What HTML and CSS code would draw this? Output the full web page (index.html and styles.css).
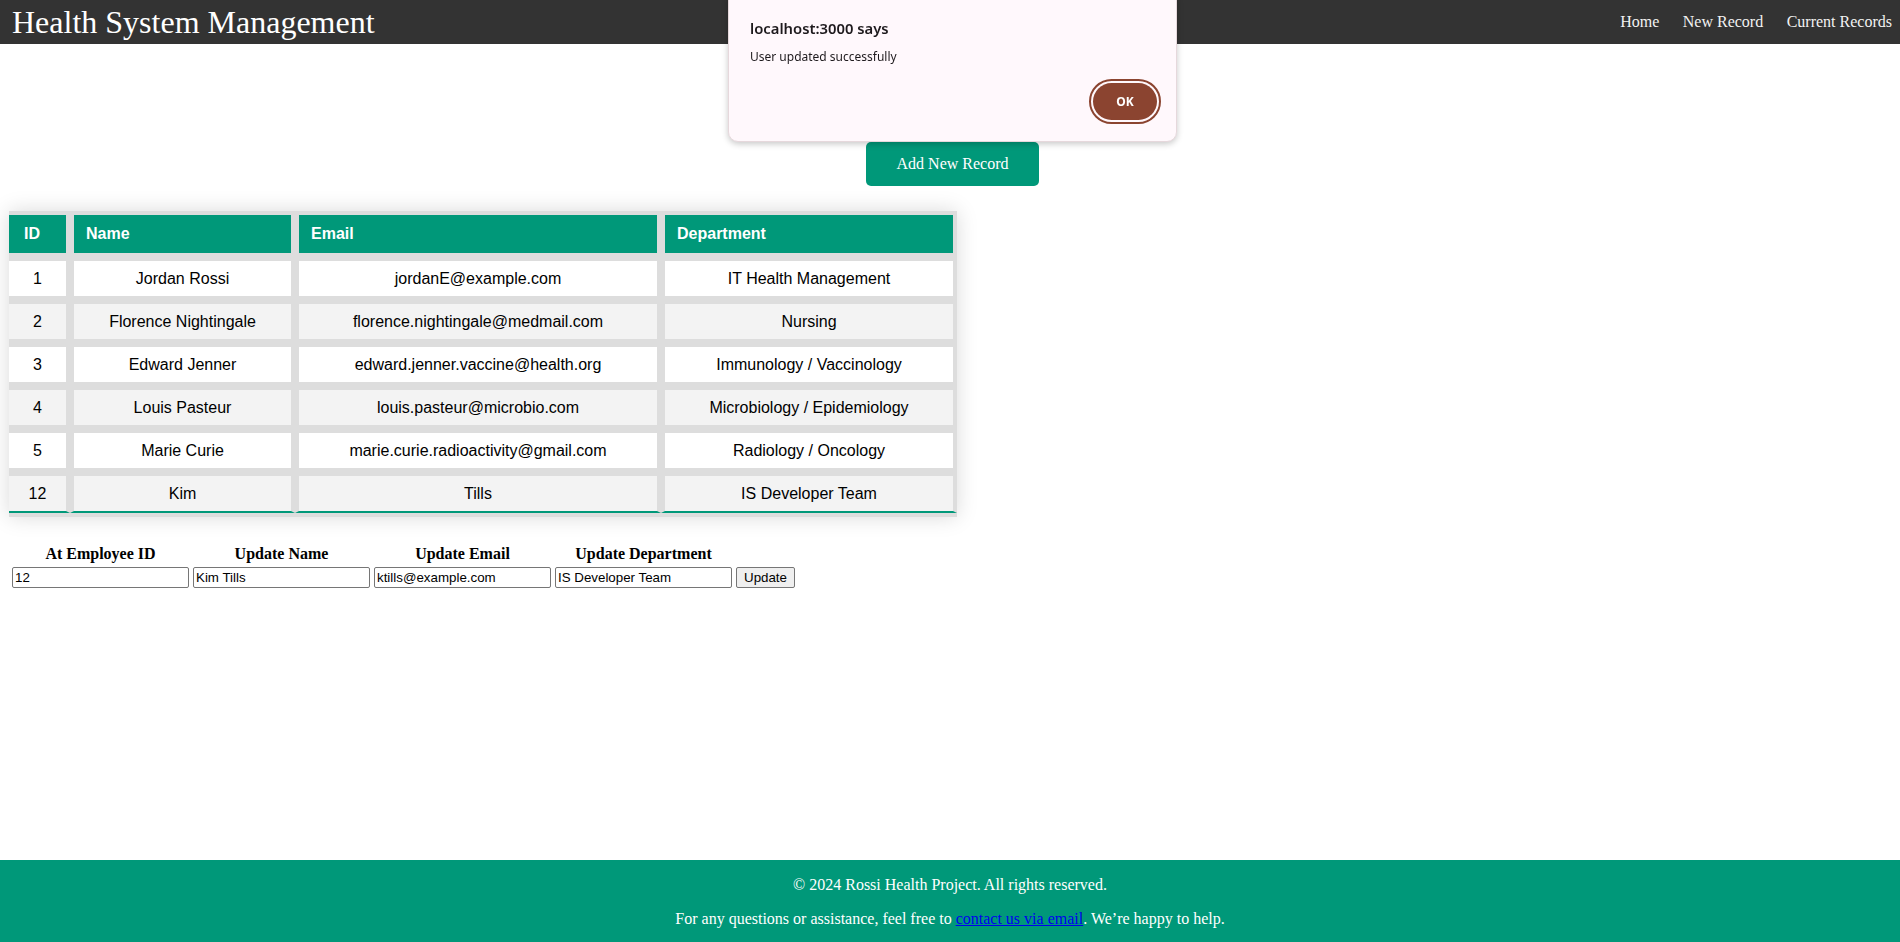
FILE: index.html
```html
<!DOCTYPE html>
<html lang="en">
<head>
<meta charset="utf-8">
<title>Health System Management</title>
<link rel="stylesheet" href="styles.css">
</head>
<body>
<header class="navbar">
  <h1 class="brand">Health System Management</h1>
  <nav class="nav-links">
    <a href="#">Home</a>
    <a href="#">New Record</a>
    <a href="#">Current Records</a>
  </nav>
</header>

<main class="content">
  <div class="actions">
    <button class="add-btn" type="button">Add New Record</button>
  </div>

  <table class="records">
    <colgroup>
      <col class="col-id">
      <col class="col-name">
      <col class="col-email">
      <col class="col-dept">
    </colgroup>
    <thead>
      <tr><th>ID</th><th>Name</th><th>Email</th><th>Department</th></tr>
    </thead>
    <tbody>
      <tr><td>1</td><td>Jordan Rossi</td><td>jordanE@example.com</td><td>IT Health Management</td></tr>
      <tr><td>2</td><td>Florence Nightingale</td><td>florence.nightingale@medmail.com</td><td>Nursing</td></tr>
      <tr><td>3</td><td>Edward Jenner</td><td>edward.jenner.vaccine@health.org</td><td>Immunology / Vaccinology</td></tr>
      <tr><td>4</td><td>Louis Pasteur</td><td>louis.pasteur@microbio.com</td><td>Microbiology / Epidemiology</td></tr>
      <tr><td>5</td><td>Marie Curie</td><td>marie.curie.radioactivity@gmail.com</td><td>Radiology / Oncology</td></tr>
      <tr><td>12</td><td>Kim</td><td>Tills</td><td>IS Developer Team</td></tr>
    </tbody>
  </table>

  <form class="update-form">
    <table class="update-table">
      <tr>
        <th>At Employee ID</th>
        <th>Update Name</th>
        <th>Update Email</th>
        <th>Update Department</th>
        <th></th>
      </tr>
      <tr>
        <td><input class="field" type="text" value="12"></td>
        <td><input class="field" type="text" value="Kim Tills"></td>
        <td><input class="field" type="text" value="ktills@example.com"></td>
        <td><input class="field" type="text" value="IS Developer Team"></td>
        <td><button class="update-btn" type="button">Update</button></td>
      </tr>
    </table>
  </form>
</main>

<footer class="site-footer">
  <p>© 2024 Rossi Health Project. All rights reserved.</p>
  <p>For any questions or assistance, feel free to <a href="#">contact us via email</a>. We’re happy to help.</p>
</footer>

<div class="alert" role="alertdialog">
  <div class="alert-title">localhost:3000 says</div>
  <div class="alert-msg">User updated successfully</div>
  <div class="alert-actions">
    <button class="alert-ok" type="button">OK</button>
  </div>
</div>
</body>
</html>
```

FILE: styles.css
```css
html, body {
  margin: 0;
  padding: 0;
}

body {
  font-family: "Liberation Serif", "Times New Roman", serif;
  font-size: 16px;
  min-height: 100vh;
  display: flex;
  flex-direction: column;
  background: #fff;
  color: #000;
}

/* Navbar */
.navbar {
  background: #333333;
  height: 44px;
  display: flex;
  align-items: center;
  justify-content: space-between;
  padding: 0 8px 0 12px;
}

.brand {
  margin: 0;
  font-size: 32px;
  font-weight: normal;
  color: #ffffff;
  line-height: 37px;
}

.nav-links {
  display: flex;
  gap: 23.5px;
}

.nav-links a {
  color: #f2f2f2;
  text-decoration: none;
  font-size: 16px;
}

/* Content */
.content {
  flex: 1;
  padding: 0 9px;
}

.actions {
  margin-top: 98px;
  text-align: center;
  padding-left: 5px;
}

.add-btn {
  background: #009879;
  color: #ffffff;
  border: none;
  border-radius: 5px;
  font-family: "Liberation Serif", "Times New Roman", serif;
  font-size: 16px;
  height: 44px;
  padding: 0 31px 1px;
  cursor: pointer;
}

/* Records table */
.records {
  margin-top: 25px;
  border-collapse: separate;
  border-spacing: 0;
  background: #dddddd;
  table-layout: fixed;
  width: 948px;
  border-bottom: 4px solid #dddddd;
  box-shadow: 0 0 20px rgba(0, 0, 0, 0.15);
  font-family: "Liberation Sans", Arial, sans-serif;
  font-size: 16px;
}

.col-id { width: 61px; }
.col-name { width: 225px; }
.col-email { width: 366px; }
.col-dept { width: 296px; }

.records th,
.records td {
  border: 4px solid #dddddd;
}

.records th:first-child,
.records td:first-child {
  border-left: 0;
}

.records th {
  background: #009879;
  color: #ffffff;
  font-weight: bold;
  text-align: left;
  line-height: 18px;
  padding: 10px 12px;
}

.records th:first-child {
  padding-left: 15px;
}

.records td {
  background: #ffffff;
  color: #000000;
  text-align: center;
  line-height: 19px;
  padding: 8px 6px;
}

.records tbody tr:nth-child(even) td {
  background: #f3f3f3;
}

.records tbody tr:last-child td {
  border-bottom: 2px solid #009879;
}

/* Update form */
.update-form {
  margin-top: 25px;
}

.update-table {
  border-spacing: 2px;
}

.update-table th {
  font-weight: bold;
  font-size: 16px;
  line-height: 18px;
  padding: 1px;
  text-align: center;
}

.update-table td {
  padding: 1px;
}

.field {
  box-sizing: border-box;
  width: 177px;
  height: 21px;
  border: 1px solid #767676;
  border-radius: 2px;
  padding: 1px 2px;
  font-family: "Liberation Sans", Arial, sans-serif;
  font-size: 13.33px;
  color: #000;
  background: #fff;
  margin: 0;
}

.update-btn {
  box-sizing: border-box;
  height: 21px;
  padding: 1px 7px;
  border: 1px solid #767676;
  border-radius: 2px;
  background: #efefef;
  font-family: "Liberation Sans", Arial, sans-serif;
  font-size: 13.33px;
  color: #000;
  margin: 0;
}

/* Footer */
.site-footer {
  background: #009879;
  color: #ffffff;
  text-align: center;
  display: flow-root;
  font-size: 16px;
  line-height: 18px;
}

.site-footer p {
  margin: 16px 0;
}

.site-footer p:last-child {
  margin-bottom: 14px;
}

.site-footer a {
  color: #0000ee;
  text-decoration: underline;
}

/* Browser alert overlay */
.alert {
  position: fixed;
  top: -10px;
  left: 728px;
  width: 449px;
  height: 152px;
  box-sizing: border-box;
  background: #fff8fc;
  border: 1px solid #e6d8dc;
  border-radius: 10px;
  box-shadow: 0 2px 6px rgba(0, 0, 0, 0.22);
  padding: 27px 19px 0 21px;
  font-family: "Noto Sans", "Open Sans", sans-serif;
  color: #1e1a1d;
}

.alert-title {
  font-size: 14.8px;
  font-weight: 600;
  line-height: 20px;
}

.alert-msg {
  margin-top: 11px;
  font-size: 12px;
  line-height: 16px;
}

.alert-actions {
  display: flex;
  justify-content: flex-end;
  margin-top: 18px;
}

.alert-ok {
  width: 64px;
  height: 37px;
  border: none;
  border-radius: 19px;
  background: #8b4430;
  color: #ffffff;
  font-family: "Noto Sans", "Open Sans", sans-serif;
  font-size: 12px;
  font-weight: 700;
  outline: 2px solid #8b4430;
  outline-offset: 2px;
}
```
